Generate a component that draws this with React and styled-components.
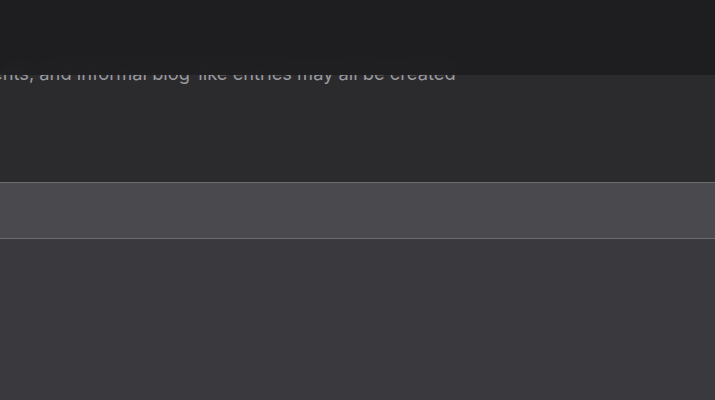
import styled, { createGlobalStyle } from "styled-components"

const GlobalStyle = createGlobalStyle`
  html, body {
    margin: 0;
    padding: 0;
    background: #3a393e;
    overflow: hidden;
  }
  body {
    font-family: Inter, "Liberation Sans", sans-serif;
  }
`

// Header (lies over the scrolled content)
const TopBar = styled.header`
  position: fixed;
  top: 0;
  left: 0;
  right: 0;
  height: 75px;
  background: rgba(30, 30, 32, 0.96);
  backdrop-filter: blur(14px);
  z-index: 10;
`

const Page = styled.main`
  display: flex;
  flex-direction: column;
  width: 100vw;
  min-height: 100vh;
`

// Article text
const TextSection = styled.section`
  background: #2b2b2e;
  height: 182px;
  box-sizing: border-box;
  padding-top: 62px;
  overflow: hidden;
`

const Line = styled.p`
  margin: 0;
  font-size: 18.3px;
  line-height: 22px;
  color: #9a9a9f;
  white-space: nowrap;
  text-indent: -8px;
`

// Field row
const Band = styled.div`
  height: 57px;
  box-sizing: border-box;
  background: #4a494e;
  border-top: 1px solid #6c6b70;
  border-bottom: 1px solid #6c6b70;
`

const Rest = styled.section`
  flex: 1;
  background: #3a393e;
`

function App() {
  return (
    <>
      <GlobalStyle />
      <TopBar />
      <Page>
        <TextSection>
          <Line>ents, and informal blog-like entries may all be created</Line>
        </TextSection>
        <Band />
        <Rest />
      </Page>
    </>
  )
}

export default App
